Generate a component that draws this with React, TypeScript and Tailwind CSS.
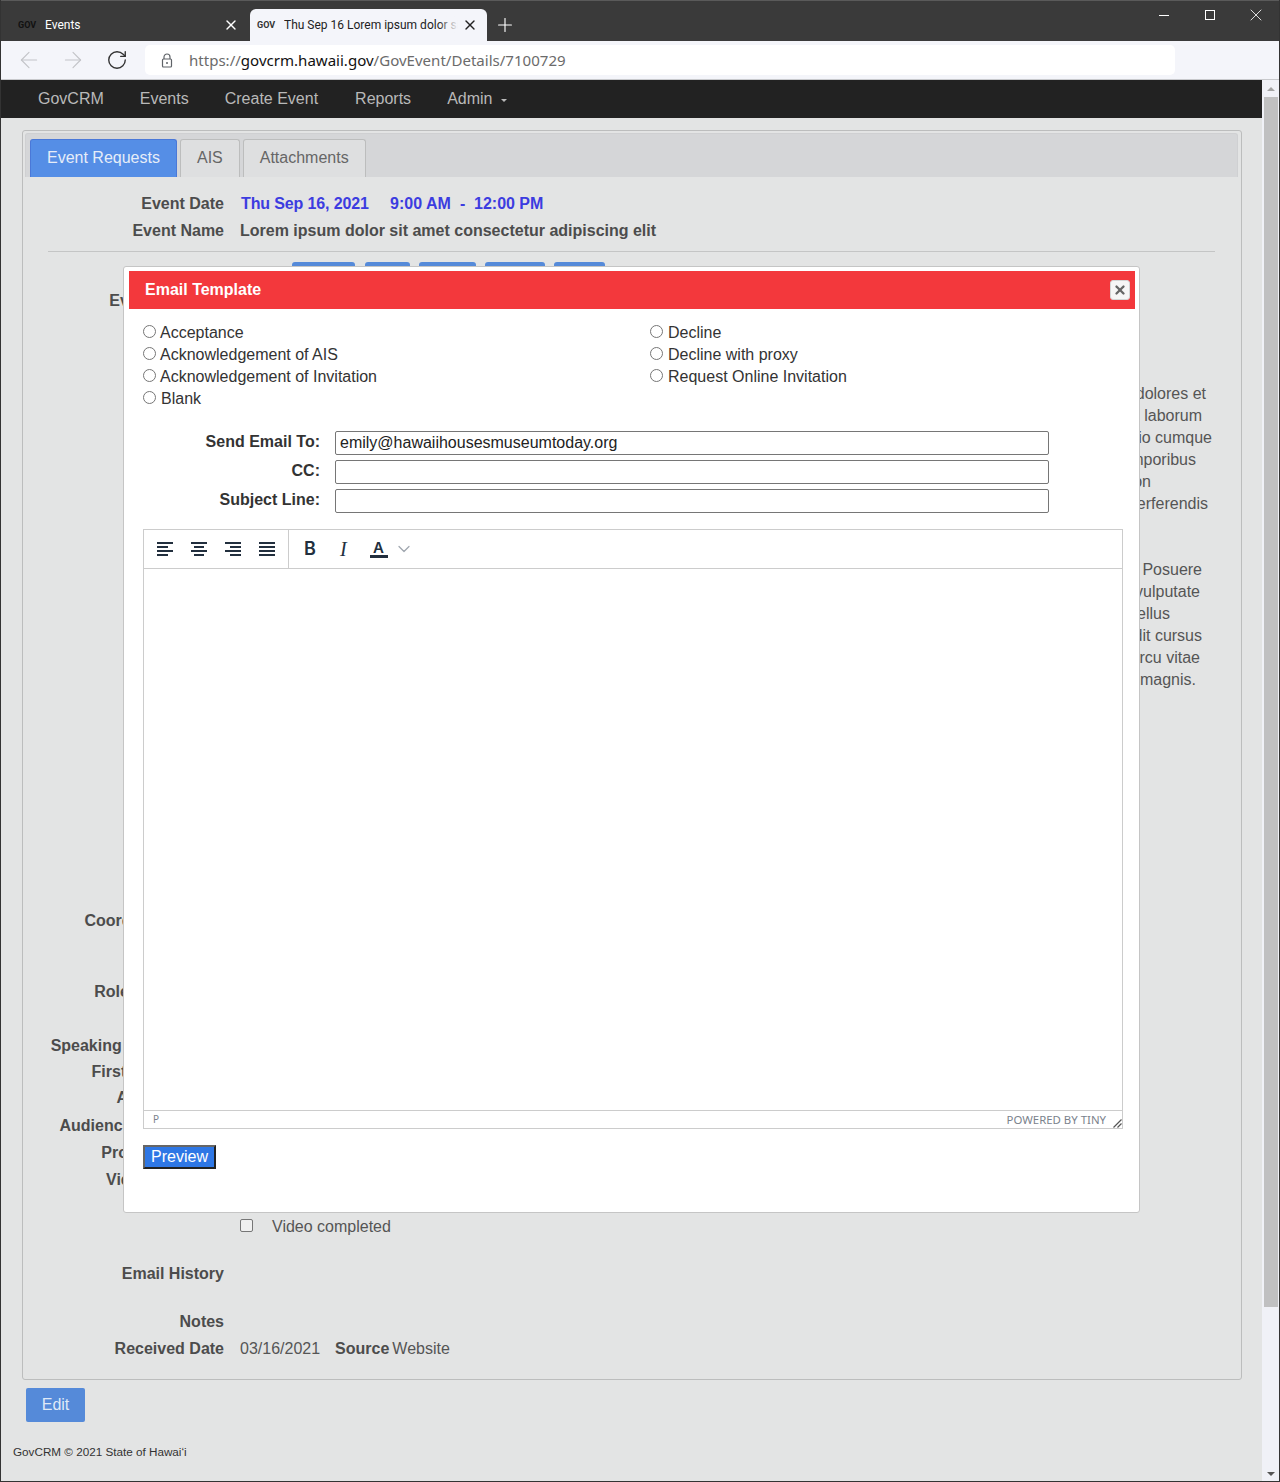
import React from 'react';
import { ArrowLeft, ArrowRight, RotateCw, Plus, X, ChevronDown } from 'lucide-react';

const PARA_ONE = [
  { text: 'et dolores et', pad: 'pr-[9px]' },
  { text: 'laborum', pad: 'pr-[13px]' },
  { text: 'odio cumque', pad: 'pr-[3px]' },
  { text: 'temporibus', pad: 'pr-[19px]' },
  { text: 'non', pad: 'pr-[64px]' },
  { text: 'perferendis', pad: 'pr-[7px]' },
];

const PARA_TWO = [
  { text: 'Posuere', pad: 'pr-[13px]' },
  { text: 'vulputate', pad: 'pr-[15px]' },
  { text: 'tellus', pad: 'pr-[45px]' },
  { text: 'blandit cursus', pad: 'pr-[13px]' },
  { text: 'arcu vitae', pad: 'pr-[15px]' },
  { text: 'magnis.', pad: 'pr-[19px]' },
];

const LEFT_RADIOS = ['Acceptance', 'Acknowledgement of AIS', 'Acknowledgement of Invitation', 'Blank'];
const RIGHT_RADIOS = ['Decline', 'Decline with proxy', 'Request Online Invitation'];

function Row({ label, className, children }: { label: string; className?: string; children?: React.ReactNode }) {
  return (
    <div className={`flex h-6 items-center leading-6 ${className ?? ''}`}>
      <div className="w-[201px] shrink-0 whitespace-nowrap flex justify-end font-bold text-[#4c4c4c]">{label}</div>
      {children}
    </div>
  );
}

function Radio({ label, wide }: { label: string; wide?: boolean }) {
  return (
    <label className="flex h-[22px] items-center">
      <span className="mb-1 h-[13px] w-[13px] rounded-full border border-[#767676] bg-white" />
      <span className={`text-[#333] ${wide ? 'ml-[5px]' : 'ml-[4px]'}`}>{label}</span>
    </label>
  );
}

function FormRow({ label, value }: { label: string; value?: string }) {
  return (
    <div className="flex h-6 items-center">
      <div className="w-[192px] pb-[2px] text-right font-bold text-[#333]">{label}</div>
      <div className="ml-[15px] h-6 w-[714px] rounded-[2px] border border-[#767676] bg-white px-[4px] leading-[22px] text-[#222]">
        {value}
      </div>
    </div>
  );
}

function AlignIcon({ lines }: { lines: number[][] }) {
  return (
    <svg width="18" height="14" viewBox="0 0 18 14" className="text-[#222f3e]">
      {lines.map(([x, w], i) => (
        <rect key={i} x={x} y={i * 4} width={w} height="2" fill="currentColor" />
      ))}
    </svg>
  );
}

export default function App() {
  return (
    <div className="relative flex h-[1482px] w-[1280px] flex-col overflow-hidden border-x border-b border-[#333] bg-[#e3e4e4] font-['Liberation_Sans',Arial,sans-serif] text-base text-[#555]">
      {/* browser chrome */}
      <div className="flex h-[41px] shrink-0 border-t border-[#5a5a5a] bg-[#3a3a3a] font-['Roboto',sans-serif] text-xs">
        <div className="flex h-10 w-[249px] items-center pl-[17px] pt-[8px] text-white">
          <span className="w-[27px] text-[9px] font-bold text-[#111]">GOV</span>
          <span>Events</span>
          <X size={16} strokeWidth={2} className="ml-auto mr-[11px] text-white" />
        </div>
        <div className="relative mt-[8px] flex h-[32px] w-[237px] items-center rounded-t-[6px] bg-[#f4f5fa] pl-[7px] text-[#222]">
          <span className="w-[27px] text-[9px] font-bold text-[#333]">GOV</span>
          <span className="w-[174px] overflow-hidden whitespace-nowrap">Thu Sep 16 Lorem ipsum dolor sit amet</span>
          <span className="absolute left-[188px] top-0 h-full w-[20px] bg-gradient-to-r from-transparent to-[#f4f5fa]" />
          <X size={16} strokeWidth={2} className="absolute right-[9px] text-[#222]" />
        </div>
        <Plus size={22} strokeWidth={1.25} className="ml-[7px] mt-[13px] text-white" />
        <div className="ml-auto flex h-6 items-center pr-[13px] pt-[4px]">
          <span className="h-px w-[10px] bg-white" />
          <span className="ml-9 h-[10px] w-[10px] border border-white" />
          <X size={20} strokeWidth={1} className="ml-[31px] text-white" />
        </div>
      </div>

      <div className="flex h-[39px] shrink-0 items-center border-b border-[#c8c9cc] bg-[#f4f5fa]">
        <ArrowLeft size={26} strokeWidth={1} className="ml-[15px] text-[#c2c3c7]" />
        <ArrowRight size={26} strokeWidth={1} className="ml-[18px] text-[#c2c3c7]" />
        <RotateCw size={22} strokeWidth={1.5} className="ml-[20px] text-[#333]" />
        <div className="ml-[17px] flex h-[30px] w-[1030px] items-center rounded-[5px] bg-white pl-[16px] font-['Noto_Sans',sans-serif] text-[15.05px] text-[#6b6b6b]">
          <svg width="12" height="15" viewBox="0 0 12 15" className="shrink-0">
            <path d="M3 6V4a3 3 0 0 1 6 0v2" fill="none" stroke="#5f6368" strokeWidth="1.2" />
            <rect x="1.5" y="6" width="9" height="8" rx="1" fill="none" stroke="#5f6368" strokeWidth="1.2" />
            <circle cx="6" cy="10" r="1" fill="#5f6368" />
          </svg>
          <span className="ml-[16px]">
            https://<span className="text-[#111]">govcrm.hawaii.gov</span>/GovEvent/Details/7100729
          </span>
        </div>
      </div>

      <div className="flex min-h-0 flex-1">
        {/* page */}
        <div className="w-[1261px] shrink-0">
          <nav className="flex h-[38px] items-center gap-9 bg-[#222] pl-[37px] text-[#b9b9b9]">
            <span>GovCRM</span>
            <span>Events</span>
            <span>Create Event</span>
            <span className="ml-[1px]">Reports</span>
            <span className="flex items-center">
              Admin
              <span className="ml-[9px] mt-[2px] h-0 w-0 border-x-[3px] border-t-[3px] border-x-transparent border-t-[#b9b9b9]" />
            </span>
          </nav>

          <div className="ml-[21px] mt-3 w-[1220px] rounded-[3px] border border-[#bcbdbd] pb-[18px]">
            <div className="mx-[2px] mt-[2px] flex h-[44px] w-[1213px] items-end gap-[3px] rounded-t-[3px] border border-b-0 border-[#cfd0d2] bg-[#d5d6d8] pl-[4px]">
              <div className="flex h-[38px] items-center rounded-t-[3px] border border-b-0 border-[#4a78d8] bg-[#558ee6] px-4 pb-[2px] text-[#e6edf8]">Event Requests</div>
              <div className="flex h-[38px] items-center rounded-t-[3px] border border-b-0 border-[#bcbdbd] bg-[#dedfe0] px-4 pb-[2px] text-[#666]">AIS</div>
              <div className="flex h-[38px] items-center rounded-t-[3px] border border-b-0 border-[#bcbdbd] bg-[#dedfe0] px-4 pb-[2px] text-[#666]">Attachments</div>
            </div>

            <Row label="Event Date" className="mt-[15px]">
              <div className="ml-[17px] flex whitespace-nowrap font-bold text-[#3c3ce0]">
                <span className="w-[149px] tracking-[-0.13px]">Thu Sep 16, 2021</span>
                <span className="w-[70px]">9:00 AM</span>
                <span className="w-[14px]">-</span>
                <span>12:00 PM</span>
              </div>
            </Row>
            <Row label="Event Name" className="mt-[3px]">
              <span className="ml-4 font-bold text-[#4c4c4c]">Lorem ipsum dolor sit amet consectetur adipiscing elit</span>
            </Row>
            <div className="ml-[25px] mt-2 h-px w-[1167px] bg-[#c4c5c5]" />
            <Row label="Status Now" className="mt-[10px]">
              <div className="ml-[68px] flex items-start gap-[9px] self-start">
                <span className="mr-[1px] h-6 w-[63px] rounded-[3px] bg-[#558ad9]" />
                <span className="h-6 w-[45px] rounded-[3px] bg-[#558ad9]" />
                <span className="h-6 w-[57px] rounded-[3px] bg-[#558ad9]" />
                <span className="h-6 w-[60px] rounded-[3px] bg-[#558ad9]" />
                <span className="h-6 w-[51px] rounded-[3px] bg-[#558ad9]" />
              </div>
            </Row>
            <Row label="Event Location" className="mt-[3px]" />

            <div className="ml-[217px] mt-[70px] w-[975px] text-right leading-[22px]">
              {PARA_ONE.map((l) => (
                <div key={l.text} className={l.pad}>{l.text}</div>
              ))}
            </div>
            <div className="ml-[217px] mt-[44px] w-[975px] text-right leading-[22px]">
              {PARA_TWO.map((l) => (
                <div key={l.text} className={l.pad}>{l.text}</div>
              ))}
            </div>

            <Row label="Coordinator Name" className="mt-[218px]" />
            <Row label="Role of Speakers" className="mt-[47px]" />
            <Row label="Speaking Requirement" className="mt-[30px]" />
            <Row label="First Lady Invited" className="mt-[2px]" />
            <Row label="Attendees No." className="mt-[2px]" />
            <Row label="Audience Description" className="mt-1" />
            <Row label="Program Details" className="mt-[3px]" />
            <Row label="Video Received" className="mt-[3px]" />
            <Row label="" className="mt-[23px]">
              <span className="mb-1 ml-[16px] h-[13px] w-[13px] rounded-[2px] border border-[#767676] bg-[#f0f0f0]" />
              <span className="ml-[19px]">Video completed</span>
            </Row>
            <Row label="Email History" className="mt-[23px]" />
            <Row label="Notes" className="mt-6" />
            <Row label="Received Date" className="mt-[3px]">
              <span className="ml-4">03/16/2021</span>
              <span className="ml-[15px] font-bold text-[#4c4c4c]">Source</span>
              <span className="ml-[3px]">Website</span>
            </Row>
          </div>

          <button className="ml-[25px] mt-2 h-[34px] w-[59px] rounded-[2px] bg-[#558ad9] text-[#dfe9f7]">Edit</button>
          <div className="ml-3 mt-[21px] text-[11.7px] text-[#333]">GovCRM © 2021 State of Hawaiʻi</div>
        </div>

        {/* scrollbar */}
        <div className="flex w-[18px] shrink-0 flex-col items-center bg-[#f0f1f7] pt-[7px]">
          <span className="h-0 w-0 border-x-[4px] border-b-[4px] border-x-transparent border-b-[#a3a3a3]" />
          <span className="mt-[6px] h-[1210px] w-[14px] bg-[#c0c0c1]" />
          <span className="mt-auto mb-[5px] h-0 w-0 border-x-[4px] border-t-[4px] border-x-transparent border-t-[#555]" />
        </div>
      </div>

      {/* email template dialog */}
      <div className="absolute left-[122px] top-[266px] h-[947px] w-[1017px] rounded-[3px] border border-[#c5c5c5] bg-white p-[4px] text-[#333]">
        <div className="ml-[1px] flex h-[38px] items-center justify-between bg-[#f3383c] pb-[1px] pl-4 pr-[5px] font-bold text-white">
          <span>Email Template</span>
          <span className="flex h-5 w-5 items-center justify-center rounded-[3px] border border-[#d5d5d5] bg-[#f6f6f6]">
            <X size={14} strokeWidth={4} className="text-[#666]" />
          </span>
        </div>

        <div className="ml-[15px] mt-[13px] flex">
          <div className="w-[507px]">
            {LEFT_RADIOS.map((r) => <Radio key={r} label={r} wide={r === 'Blank'} />)}
          </div>
          <div>
            {RIGHT_RADIOS.map((r) => <Radio key={r} label={r} wide />)}
          </div>
        </div>

        <div className="mt-[21px] flex flex-col gap-[5px]">
          <FormRow label="Send Email To:" value="emily@hawaiihousesmuseumtoday.org" />
          <FormRow label="CC:" />
          <FormRow label="Subject Line:" />
        </div>

        <div className="ml-[15px] mt-4 flex h-[600px] w-[980px] flex-col border border-[#ccc]">
          <div className="flex h-[39px] shrink-0 items-center border-b border-[#ccc] text-[#222f3e]">
            <div className="flex h-full items-center gap-4 border-r border-[#ccc] pl-[13px] pr-[11px]">
              <AlignIcon lines={[[0, 16], [0, 11], [0, 16], [0, 11]]} />
              <AlignIcon lines={[[0, 16], [3, 10], [0, 16], [3, 10]]} />
              <AlignIcon lines={[[0, 16], [5, 11], [0, 16], [5, 11]]} />
              <AlignIcon lines={[[0, 16], [0, 16], [0, 16], [0, 16]]} />
            </div>
            <span className="ml-[15px] font-['Inter',sans-serif] text-[18px] font-semibold leading-none">B</span>
            <span className="ml-6 font-['Liberation_Serif',serif] text-[20px] italic leading-none">I</span>
            <span className="ml-[23px] flex w-[18px] flex-col items-center font-['Inter',sans-serif] text-[15px] font-semibold leading-[15px]">
              A
              <span className="h-[3px] w-full bg-[#222f3e]" />
            </span>
            <ChevronDown size={20} strokeWidth={1.5} className="ml-[6px] text-[#a0a7af]" />
          </div>
          <div className="flex-1" />
          <div className="relative flex h-[18px] shrink-0 items-center justify-between border-t border-[#ccc] pl-[9px] pr-[16px] font-['Noto_Sans',sans-serif] text-[#7a828c]">
            <span className="text-[10px]">P</span>
            <span className="text-[11.4px]">POWERED BY TINY</span>
            <svg width="9" height="9" viewBox="0 0 9 9" className="absolute bottom-0 right-0">
              <path d="M0.5 8.5 L8.5 0.5 M4.5 8.5 L8.5 4.5" stroke="#555" strokeWidth="1.2" fill="none" />
            </svg>
          </div>
        </div>

        <button className="ml-[15px] mt-4 h-6 w-[73px] border-2 border-b-[#222] border-l-[#666] border-r-[#222] border-t-[#666] bg-[#2e77e5] leading-[18px] text-white">Preview</button>
      </div>
    </div>
  );
}
